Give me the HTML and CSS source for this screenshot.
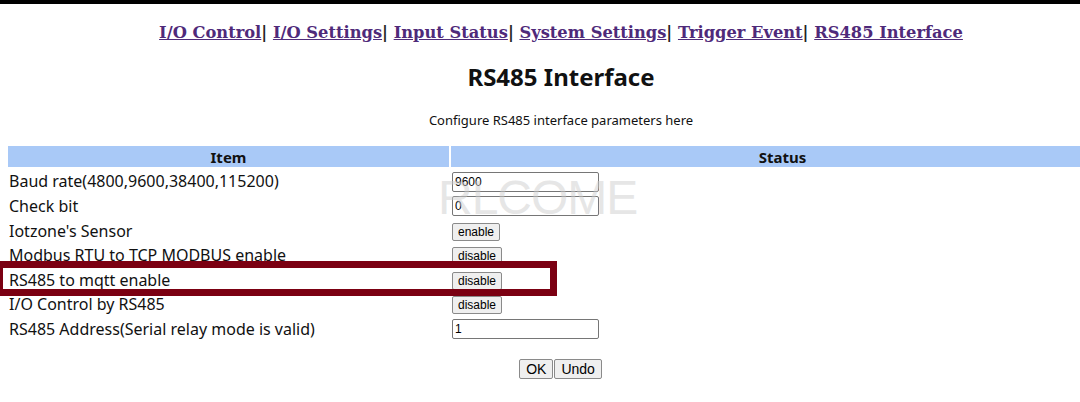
FILE: index.html
```html
<!DOCTYPE html>
<html lang="en">

<head>
  <meta charset="UTF-8" />
  <title>RS485 Interface</title>
  <link rel="stylesheet" href="styles.css">
</head>

<body>
  <div class="page">
    <!-- Top navigation -->
    <div class="nav">
      <a href="#">I/O Control</a>| <a href="#">I/O Settings</a>| <a href="#">Input Status</a>| <a href="#">System Settings</a>| <a href="#">Trigger Event</a>| <a href="#">RS485 Interface</a>
    </div>

    <h2 class="title">RS485 Interface</h2>
    <p class="subtitle">Configure RS485 interface parameters here</p>

    <div class="panel">
      <table class="config">
        <tr>
          <th class="col-item">Item</th>
          <th>Status</th>
        </tr>
        <tr>
          <td>Baud rate(4800,9600,38400,115200)</td>
          <td><input type="text" value="9600" /></td>
        </tr>
        <tr>
          <td>Check bit</td>
          <td><input type="text" value="0" /></td>
        </tr>
        <tr>
          <td>Iotzone's Sensor</td>
          <td><button>enable</button></td>
        </tr>
        <tr>
          <td>Modbus RTU to TCP MODBUS enable</td>
          <td><button>disable</button></td>
        </tr>
        <tr>
          <td>RS485 to mqtt enable</td>
          <td><button>disable</button></td>
        </tr>
        <tr>
          <td>I/O Control by RS485</td>
          <td><button>disable</button></td>
        </tr>
        <tr>
          <td>RS485 Address(Serial relay mode is valid)</td>
          <td><input type="text" value="1" /></td>
        </tr>
      </table>

      <!-- screenshot annotations -->
      <div class="watermark">RLCOME</div>
      <div class="highlight"></div>
    </div>

    <div class="actions">
      <button>OK</button><button>Undo</button>
    </div>
  </div>
</body>

</html>
```

FILE: styles.css
```css
/* General Styles */
body {
  margin: 0;
  padding: 0 8px;
  border-top: 4px solid #000;
  background-color: #fff;
  font-family: "Noto Sans", "Open Sans", sans-serif;
  color: #111;
  overflow: hidden;
}

/* page is wider than the window, like the original */
.page {
  width: 1106px;
}

/* Navigation */
.nav {
  margin-top: 18px;
  text-align: center;
  font-family: "DejaVu Serif", serif;
  font-weight: bold;
  font-size: 16.3px;
  color: #222;
  line-height: 22px;
}

.nav a {
  color: #4f2a7a;
}

.title {
  margin: 18px 0 0;
  text-align: center;
  font-size: 24px;
  line-height: 30px;
}

.subtitle {
  margin: 19px 0 0;
  text-align: center;
  font-size: 13px;
  line-height: 18px;
}

/* Config table */
.panel {
  position: relative;
  margin-top: 17px;
}

.config {
  width: 1110px;
  border-collapse: separate;
  border-spacing: 2px 0;
  margin-left: -2px;
}

.config th {
  background-color: #a9c9f7;
  font-size: 15px;
  height: 21px;
  padding: 0;
}

.config .col-item {
  width: 441px;
}

.config td {
  height: 20.5px;
  padding: 4px 0 0 1px;
  font-size: 16px;
  line-height: 18px;
  vertical-align: middle;
}

input {
  width: 141px;
  height: 16px;
  padding: 1px 2px;
  border: 1px solid #767676;
  border-radius: 2px;
  font-family: "Liberation Sans", Arial, sans-serif;
  font-size: 12px;
  color: #000;
  vertical-align: middle;
}

button {
  padding: 1px 5px;
  border: 1px solid #8a8a8a;
  border-radius: 2px;
  background-color: #efefef;
  font-family: "Liberation Sans", Arial, sans-serif;
  font-size: 12px;
  color: #000;
  vertical-align: middle;
}

/* Annotations over the screenshot */
.watermark {
  position: absolute;
  left: 430px;
  top: 24px;
  font-family: "Liberation Sans", sans-serif;
  font-size: 48px;
  color: rgba(205, 205, 205, 0.5);
  letter-spacing: -1px;
  pointer-events: none;
}

.highlight {
  position: absolute;
  left: -12px;
  top: 115px;
  width: 547px;
  height: 21px;
  border: 7px solid #7b0012;
}

/* Bottom buttons */
.actions {
  margin-top: 17px;
  text-align: center;
}

.actions button {
  font-size: 14px;
  padding: 1px 6px;
  margin: 0 1px 0 0;
}
```
